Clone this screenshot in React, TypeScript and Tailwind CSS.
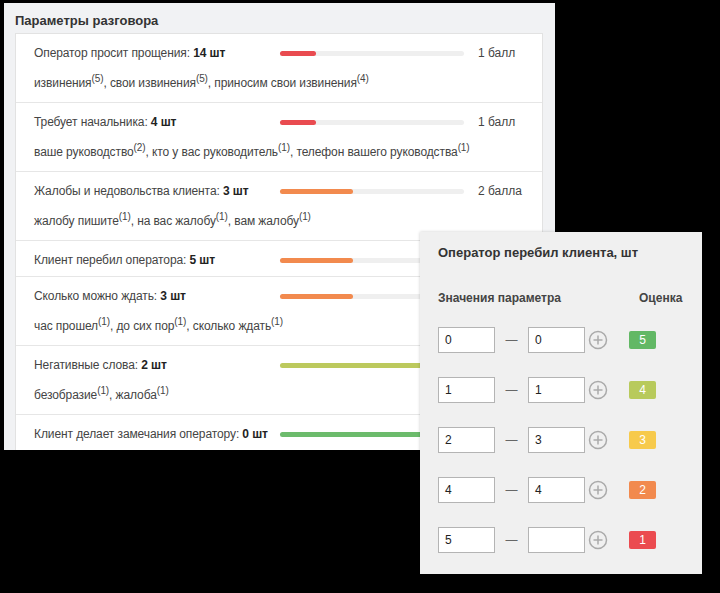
import type { ReactNode } from "react";

type Tag = { word: string; n: number };

interface Param {
	title: string;
	count: number;
	fill: number;
	color: string;
	score?: string;
	tags?: Tag[];
}

const params: Param[] = [
	{
		title: "Оператор просит прощения",
		count: 14,
		fill: 36,
		color: "bg-[#e94b50]",
		score: "1 балл",
		tags: [
			{ word: "извинения", n: 5 },
			{ word: "свои извинения", n: 5 },
			{ word: "приносим свои извинения", n: 4 },
		],
	},
	{
		title: "Требует начальника",
		count: 4,
		fill: 36,
		color: "bg-[#e94b50]",
		score: "1 балл",
		tags: [
			{ word: "ваше руководство", n: 2 },
			{ word: "кто у вас руководитель", n: 1 },
			{ word: "телефон вашего руководства", n: 1 },
		],
	},
	{
		title: "Жалобы и недовольства клиента",
		count: 3,
		fill: 73,
		color: "bg-[#f28a4e]",
		score: "2 балла",
		tags: [
			{ word: "жалобу пишите", n: 1 },
			{ word: "на вас жалобу", n: 1 },
			{ word: "вам жалобу", n: 1 },
		],
	},
	{ title: "Клиент перебил оператора", count: 5, fill: 73, color: "bg-[#f28a4e]" },
	{
		title: "Сколько можно ждать",
		count: 3,
		fill: 73,
		color: "bg-[#f28a4e]",
		tags: [
			{ word: "час прошел", n: 1 },
			{ word: "до сих пор", n: 1 },
			{ word: "сколько ждать", n: 1 },
		],
	},
	{
		title: "Негативные слова",
		count: 2,
		fill: 184,
		color: "bg-[#bcc95d]",
		tags: [
			{ word: "безобразие", n: 1 },
			{ word: "жалоба", n: 1 },
		],
	},
	{ title: "Клиент делает замечания оператору", count: 0, fill: 184, color: "bg-[#6cbb6c]" },
];

const ranges = [
	{ from: "0", to: "0", grade: 5, color: "bg-[#62b865]" },
	{ from: "1", to: "1", grade: 4, color: "bg-[#b8ca5c]" },
	{ from: "2", to: "3", grade: 3, color: "bg-[#f7ca4c]" },
	{ from: "4", to: "4", grade: 2, color: "bg-[#f28a4e]" },
	{ from: "5", to: "", grade: 1, color: "bg-[#eb4b50]" },
];

const Line = ({ children }: { children: ReactNode }) => (
	<div className="flex h-[30px] items-center">{children}</div>
);

const ParamRow = ({ p }: { p: Param }) => (
	<div
		className={`border-b border-[#e6e6e6] pt-[4px] pl-[18px] ${p.tags ? "pb-[4px]" : "pb-[1px]"}`}
	>
		<Line>
			<span className="w-[246px] shrink-0 tracking-[-0.1px]">
				{p.title}: <b className="font-bold text-[#222]">{p.count} шт</b>
			</span>
			<div className="h-[5px] w-[184px] shrink-0 rounded-full bg-[#efefef]">
				<div className={`h-full rounded-full ${p.color}`} style={{ width: p.fill }} />
			</div>
			{p.score && <span className="ml-[14px]">{p.score}</span>}
		</Line>
		{p.tags && (
			<Line>
				<span className="tracking-[-0.1px]">
					{p.tags.map((t, i) => (
						<span key={t.word}>
							{t.word}
							<sup className="text-[10px]">({t.n})</sup>
							{i < p.tags!.length - 1 && ", "}
						</span>
					))}
				</span>
			</Line>
		)}
	</div>
);

const PlusCircle = () => (
	<svg width="20" height="20" viewBox="0 0 20 20" fill="none" stroke="#aaaaaa" strokeWidth="1.5">
		<circle cx="10" cy="10" r="8.5" />
		<path d="M10 5.5v9M5.5 10h9" />
	</svg>
);

const Field = ({ value }: { value: string }) => (
	<div className="flex h-[26px] w-[57px] items-center border border-[#b4b4b4] bg-white pl-[6px] text-[12px] text-[#222]">
		{value}
	</div>
);

export default function App() {
	return (
		<div
			className="relative h-[593px] w-[720px] overflow-hidden bg-black text-[12px] text-[#444]"
			style={{ fontFamily: '"Liberation Sans", Arial, sans-serif' }}
		>
			<div className="mt-[3px] ml-[4px] h-[447px] w-[551px] overflow-hidden bg-[#f1f2f4] px-[11px] pt-[10px]">
				<h2 className="mb-[4px] h-[16px] text-[13px] leading-[16px] font-bold text-[#333]">
					Параметры разговора
				</h2>
				<div className="w-[528px] border border-b-0 border-[#e2e2e2] bg-white">
					{params.map((p) => (
						<ParamRow key={p.title} p={p} />
					))}
				</div>
			</div>

			<div className="absolute top-[232px] left-[420px] h-[342px] w-[282px] bg-[#f0f0f0] pt-[13px] pl-[18px] shadow-[0_0_3px_rgba(0,0,0,0.2)]">
				<div className="h-[16px] text-[13px] leading-[16px] font-bold text-[#333]">
					Оператор перебил клиента, шт
				</div>
				<div className="mt-[29px] flex h-[16px] items-center font-bold text-[#444]">
					<span className="w-[201px]">Значения параметра</span>
					<span>Оценка</span>
				</div>
				<div className="mt-[21px] flex flex-col gap-[24px]">
					{ranges.map((r) => (
						<div key={r.grade} className="flex items-center">
							<Field value={r.from} />
							<span className="w-[33px] text-center text-[#666]">—</span>
							<Field value={r.to} />
							<span className="ml-[3px]">
								<PlusCircle />
							</span>
							<span
								className={`ml-[21px] flex h-[18px] w-[27px] items-center justify-center rounded-[2px] text-white ${r.color}`}
							>
								{r.grade}
							</span>
						</div>
					))}
				</div>
			</div>
		</div>
	);
}
